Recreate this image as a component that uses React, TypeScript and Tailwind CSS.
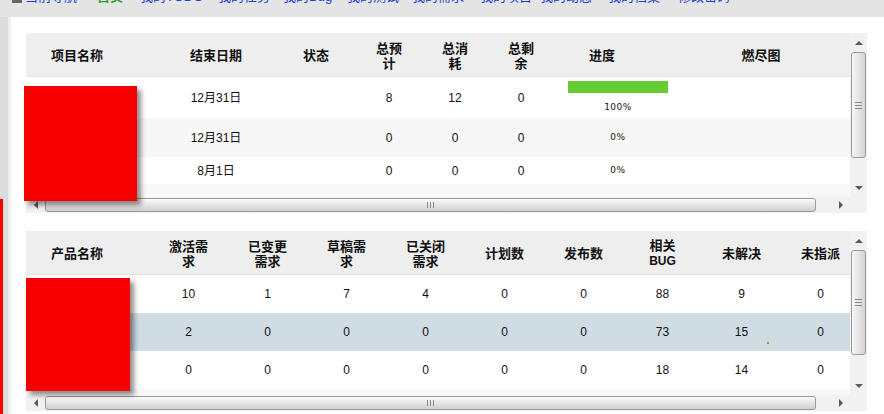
import React from 'react';

const navItems = [
    { label: '我的TODO', w: 'w-[78px]' },
    { label: '我的任务', w: 'w-[65px]' },
    { label: '我的Bug', w: 'w-[64px]' },
    { label: '我的测试', w: 'w-[65px]' },
    { label: '我的需求', w: 'w-[68px]' },
    { label: '我的项目', w: 'w-[60px]' },
    { label: '我的动态', w: 'w-[68px]' },
    { label: '我的档案', w: 'w-[70px]' },
    { label: '修改密码', w: 'w-[60px]' },
];

const VScroll: React.FC<{ thumb: string }> = ({ thumb }) => (
    <div className="flex flex-col w-[17px] h-[164px] bg-[#f1f1f1]">
        <div className="h-[19px] flex items-center justify-center">
            <div className="w-0 h-0 border-x-[4px] border-x-transparent border-b-[4px] border-b-[#5a5a5a]"></div>
        </div>
        <div className={`mx-[1px] rounded-[3px] border border-[#9a9a9a] bg-gradient-to-r from-[#f7f7f7] to-[#d4d4d4] flex flex-col items-center justify-center gap-[2px] ${thumb}`}>
            <div className="w-[7px] h-[1px] bg-[#8a8a8a]"></div>
            <div className="w-[7px] h-[1px] bg-[#8a8a8a]"></div>
            <div className="w-[7px] h-[1px] bg-[#8a8a8a]"></div>
        </div>
        <div className="flex-1"></div>
        <div className="h-[19px] flex items-center justify-center">
            <div className="w-0 h-0 border-x-[4px] border-x-transparent border-t-[4px] border-t-[#5a5a5a]"></div>
        </div>
    </div>
);

const HScroll: React.FC = () => (
    <div className="flex h-[16px]">
        <div className="flex w-[824px] bg-[#f1f1f1]">
            <div className="w-[19px] flex items-center justify-center">
                <div className="w-0 h-0 border-y-[4px] border-y-transparent border-r-[4px] border-r-[#5a5a5a]"></div>
            </div>
            <div className="w-[771px] mt-[1px] h-[14px] rounded-[3px] border border-[#9a9a9a] bg-gradient-to-b from-[#fbfbfb] to-[#cfcfcf] flex items-center justify-center gap-[2px]">
                <div className="w-[1px] h-[6px] bg-[#8a8a8a]"></div>
                <div className="w-[1px] h-[6px] bg-[#8a8a8a]"></div>
                <div className="w-[1px] h-[6px] bg-[#8a8a8a]"></div>
            </div>
            <div className="flex-1"></div>
            <div className="w-[19px] flex items-center justify-center">
                <div className="w-0 h-0 border-y-[4px] border-y-transparent border-l-[4px] border-l-[#5a5a5a]"></div>
            </div>
        </div>
        <div className="w-[17px] bg-[#f1f1f1]"></div>
    </div>
);

const Progress: React.FC<{ pct: number }> = ({ pct }) => (
    <div className="w-[100px] flex flex-col items-center">
        {pct > 0 && <div className="w-[100px] h-[12px] bg-[#66cc33] mb-[8px]"></div>}
        <span className="text-[9px] tracking-[0.5px] [font-family:'DejaVu_Sans',sans-serif] text-[#111]">{pct}%</span>
    </div>
);

const projectRows = [
    { date: '12月31日', est: 8, used: 12, left: 0, pct: 100, h: 'h-[41px]', bg: 'bg-white' },
    { date: '12月31日', est: 0, used: 0, left: 0, pct: 0, h: 'h-[39px]', bg: 'bg-[#f7f7f7]' },
    { date: '8月1日', est: 0, used: 0, left: 0, pct: 0, h: 'h-[27px]', bg: 'bg-white' },
];

const productRows = [
    { v: [10, 1, 7, 4, 0, 0, 88, 9, 0], bg: 'bg-white' },
    { v: [2, 0, 0, 0, 0, 0, 73, 15, 0], bg: 'bg-[#cfdce3]' },
    { v: [0, 0, 0, 0, 0, 0, 18, 14, 0], bg: 'bg-white' },
];

const th = 'font-bold text-[13px] leading-[15px] text-[#111] [font-family:"Noto_Sans_CJK_SC",sans-serif]';
const grid1 = 'grid grid-cols-[102px_152px_72px_74px_58px_74px_92px_200px] items-center';
const grid2 = 'grid grid-cols-[123px_79px_79px_79px_79px_79px_79px_79px_79px_79px] items-center w-[834px]';

const ProjectTable: React.FC = () => (
    <div className="relative w-[841px]">
        <div className="flex">
            <div className="w-[824px] h-[164px] overflow-hidden flex flex-col">
                <div className={`${grid1} h-[44px] bg-[#eeeeee] border-b border-[#e2e2e2] text-center ${th}`}>
                    <div className="text-left pl-[25px]">项目名称</div>
                    <div className="pl-[24px]">结束日期</div>
                    <div>状态</div>
                    <div>总预<br />计</div>
                    <div>总消<br />耗</div>
                    <div>总剩<br />余</div>
                    <div className="pr-[4px]">进度</div>
                    <div className="pl-[22px]">燃尽图</div>
                </div>
                {projectRows.map((r, i) => (
                    <div key={i} className={`${grid1} ${r.h} ${r.bg} text-center text-[12px]`}>
                        <div></div>
                        <div className="pl-[24px]">{r.date}</div>
                        <div></div>
                        <div>{r.est}</div>
                        <div>{r.used}</div>
                        <div>{r.left}</div>
                        <div className="pl-[10px] overflow-visible"><Progress pct={r.pct} /></div>
                        <div></div>
                    </div>
                ))}
                <div className="flex-1 bg-[#f8f8f8]"></div>
            </div>
            <VScroll thumb="h-[106px]" />
        </div>
        <HScroll />
        <div className="absolute left-[-2px] top-[53px] w-[113px] h-[115px] bg-[#f80000] shadow-[4px_4px_5px_rgba(0,0,0,0.45)]"></div>
    </div>
);

const ProductTable: React.FC = () => (
    <div className="relative w-[841px]">
        <div className="flex">
            <div className="w-[824px] h-[164px] overflow-hidden flex flex-col">
                <div className={`${grid2} h-[44px] bg-[#eeeeee] border-b border-[#e2e2e2] text-center ${th}`}>
                    <div className="text-left pl-[25px]">产品名称</div>
                    <div>激活需<br />求</div>
                    <div>已变更<br />需求</div>
                    <div>草稿需<br />求</div>
                    <div>已关闭<br />需求</div>
                    <div>计划数</div>
                    <div>发布数</div>
                    <div>相关<br /><span className="[font-family:'Liberation_Sans',sans-serif] text-[12px]">BUG</span></div>
                    <div>未解决</div>
                    <div>未指派</div>
                </div>
                {productRows.map((r, i) => (
                    <div key={i} className={`${grid2} h-[38px] ${r.bg} text-center text-[12px] relative`}>
                        <div></div>
                        {r.v.map((v, j) => (
                            <div key={j}>{v}</div>
                        ))}
                        {i === 1 && <span className="absolute left-[741px] top-[29px] w-[2px] h-[2px] bg-[#ff7a00]"></span>}
                    </div>
                ))}
                <div className="flex-1 bg-[#f8f8f8]"></div>
            </div>
            <VScroll thumb="h-[105px]" />
        </div>
        <HScroll />
        <div className="absolute left-0 top-[47px] w-[104px] h-[113px] bg-[#f80000] shadow-[4px_4px_5px_rgba(0,0,0,0.45)]"></div>
    </div>
);

export default function App() {
    return (
        <div className="w-[884px] h-[414px] overflow-hidden bg-[#e4e4e4] text-[#111] [font-family:'Liberation_Sans','Noto_Sans_CJK_SC',sans-serif]">
            <div className="h-[17px] overflow-hidden">
                <div className="flex items-end -mt-[11px] pl-[12px] text-[13px] leading-[16px] whitespace-nowrap">
                    <div className="w-[10px] h-[3px] bg-[#666] mb-[2px] mr-[3px]"></div>
                    <span className="w-[72px] text-[#1c3ed4]">当前导航</span>
                    <span className="w-[43px] text-[#22a022] font-bold">首页</span>
                    {navItems.map((n) => (
                        <span key={n.label} className={`${n.w} text-[#1c3ed4]`}>{n.label}</span>
                    ))}
                </div>
            </div>
            <div className="flex h-[397px]">
                <div className="flex flex-col w-[3px]">
                    <div className="h-[182px] bg-[#dcdcdc]"></div>
                    <div className="flex-1 bg-[#f00000]"></div>
                </div>
                <div className="w-[5px] bg-[#dcdcdc]"></div>
                <div className="w-[3px] bg-[#eeeeee]"></div>
                <div className="flex-1 bg-white pl-[15px] pt-[16px] flex flex-col gap-[18px]">
                    <ProjectTable />
                    <ProductTable />
                </div>
            </div>
        </div>
    );
}
